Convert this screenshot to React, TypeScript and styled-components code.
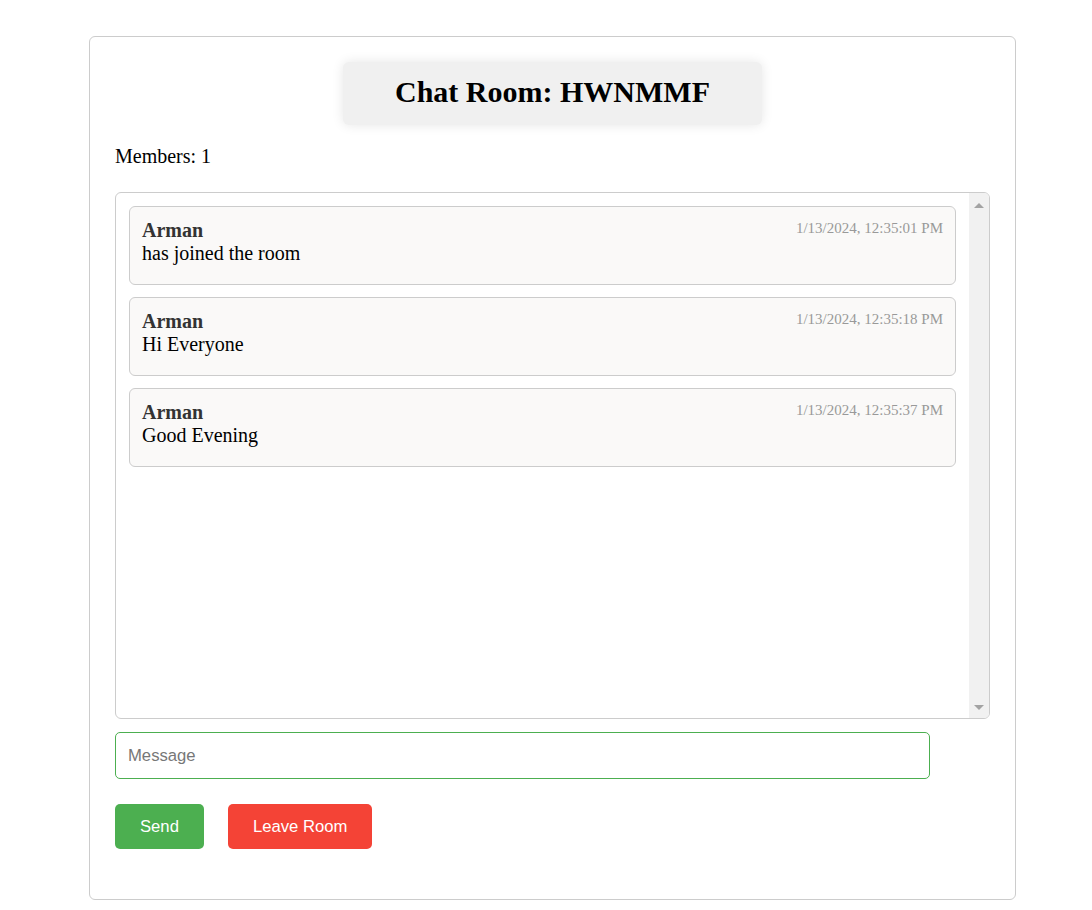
import React from "react";
import styled, { createGlobalStyle } from "styled-components";

const GlobalStyle = createGlobalStyle`
  html, body { margin: 0; padding: 0; background: #ffffff; }
  body { font-family: "Liberation Serif", "Times New Roman", serif; color: #000; }
  * { box-sizing: border-box; }
`;

const Page = styled.div`
  padding: 36px 0 11px 89px;
`;

const Container = styled.div`
  width: 927px;
  border: 1px solid #cccccc;
  border-radius: 6px;
  padding: 24px 25px 50px 25px;
  display: flex;
  flex-direction: column;
`;

const Title = styled.h2`
  align-self: center;
  margin: 1px 0 20px 0;
  padding: 12px 52px 16px 52px;
  background: #f0f0f0;
  border-radius: 6px;
  box-shadow: 0 0 12px rgba(0, 0, 0, 0.1);
  font-size: 30px;
  line-height: 35px;
  font-weight: bold;
`;

const Members = styled.p`
  margin: 0 0 24px 0;
  font-size: 20px;
  line-height: 23px;
`;

const ChatBox = styled.div`
  height: 527px;
  border: 1px solid #cccccc;
  border-radius: 6px;
  display: flex;
  overflow: hidden;
`;

const MessageList = styled.div`
  flex: 1;
  padding: 13px 13px;
  display: flex;
  flex-direction: column;
  gap: 12px;
`;

const Card = styled.div`
  border: 1px solid #cccccc;
  border-radius: 6px;
  background: #faf9f8;
  padding: 12px 12px 19px 12px;
  display: flex;
  flex-direction: column;
`;

const CardHeader = styled.div`
  display: flex;
  justify-content: space-between;
  align-items: flex-start;
`;

const Sender = styled.strong`
  font-size: 20px;
  line-height: 23px;
  color: #333333;
`;

const Time = styled.span`
  font-size: 15px;
  line-height: 17px;
  color: #999999;
  padding-top: 1px;
`;

const Text = styled.div`
  font-size: 20px;
  line-height: 23px;
`;

const ScrollTrack = styled.div`
  width: 20px;
  background: #f1f1f1;
  display: flex;
  flex-direction: column;
  justify-content: space-between;
  align-items: center;
  padding: 10px 0 8px 0;
`;

const Arrow = styled.div<{ $down?: boolean }>`
  width: 0;
  height: 0;
  border-left: 5px solid transparent;
  border-right: 5px solid transparent;
  ${(p) =>
    p.$down
      ? "border-top: 5px solid #a3a3a3;"
      : "border-bottom: 5px solid #a3a3a3;"}
`;

const Input = styled.input`
  margin-top: 13px;
  width: 815px;
  height: 47px;
  border: 1px solid #4caf50;
  border-radius: 5px;
  padding: 0 12px;
  font-family: "Liberation Sans", Arial, sans-serif;
  font-size: 16.67px;
  outline: none;
  &::placeholder { color: #777777; }
`;

const ButtonRow = styled.div`
  margin-top: 25px;
  display: flex;
  gap: 24px;
`;

const Button = styled.button<{ $color: string }>`
  height: 45px;
  padding: 0 25px;
  border: none;
  border-radius: 5px;
  background: ${(p) => p.$color};
  color: #ffffff;
  font-family: "Liberation Sans", Arial, sans-serif;
  font-size: 16.67px;
  cursor: pointer;
`;

const messages = [
  { sender: "Arman", text: "has joined the room", time: "1/13/2024, 12:35:01 PM" },
  { sender: "Arman", text: "Hi Everyone", time: "1/13/2024, 12:35:18 PM" },
  { sender: "Arman", text: "Good Evening", time: "1/13/2024, 12:35:37 PM" },
];

export default function App() {
  return (
    <>
      <GlobalStyle />
      <Page>
        <Container>
          <Title>Chat Room: HWNMMF</Title>
          <Members>Members: 1</Members>
          <ChatBox>
            <MessageList>
              {messages.map((m, i) => (
                <Card key={i}>
                  <CardHeader>
                    <Sender>{m.sender}</Sender>
                    <Time>{m.time}</Time>
                  </CardHeader>
                  <Text>{m.text}</Text>
                </Card>
              ))}
            </MessageList>
            <ScrollTrack>
              <Arrow />
              <Arrow $down />
            </ScrollTrack>
          </ChatBox>
          <Input placeholder="Message" />
          <ButtonRow>
            <Button $color="#4caf50">Send</Button>
            <Button $color="#f44336">Leave Room</Button>
          </ButtonRow>
        </Container>
      </Page>
    </>
  );
}
